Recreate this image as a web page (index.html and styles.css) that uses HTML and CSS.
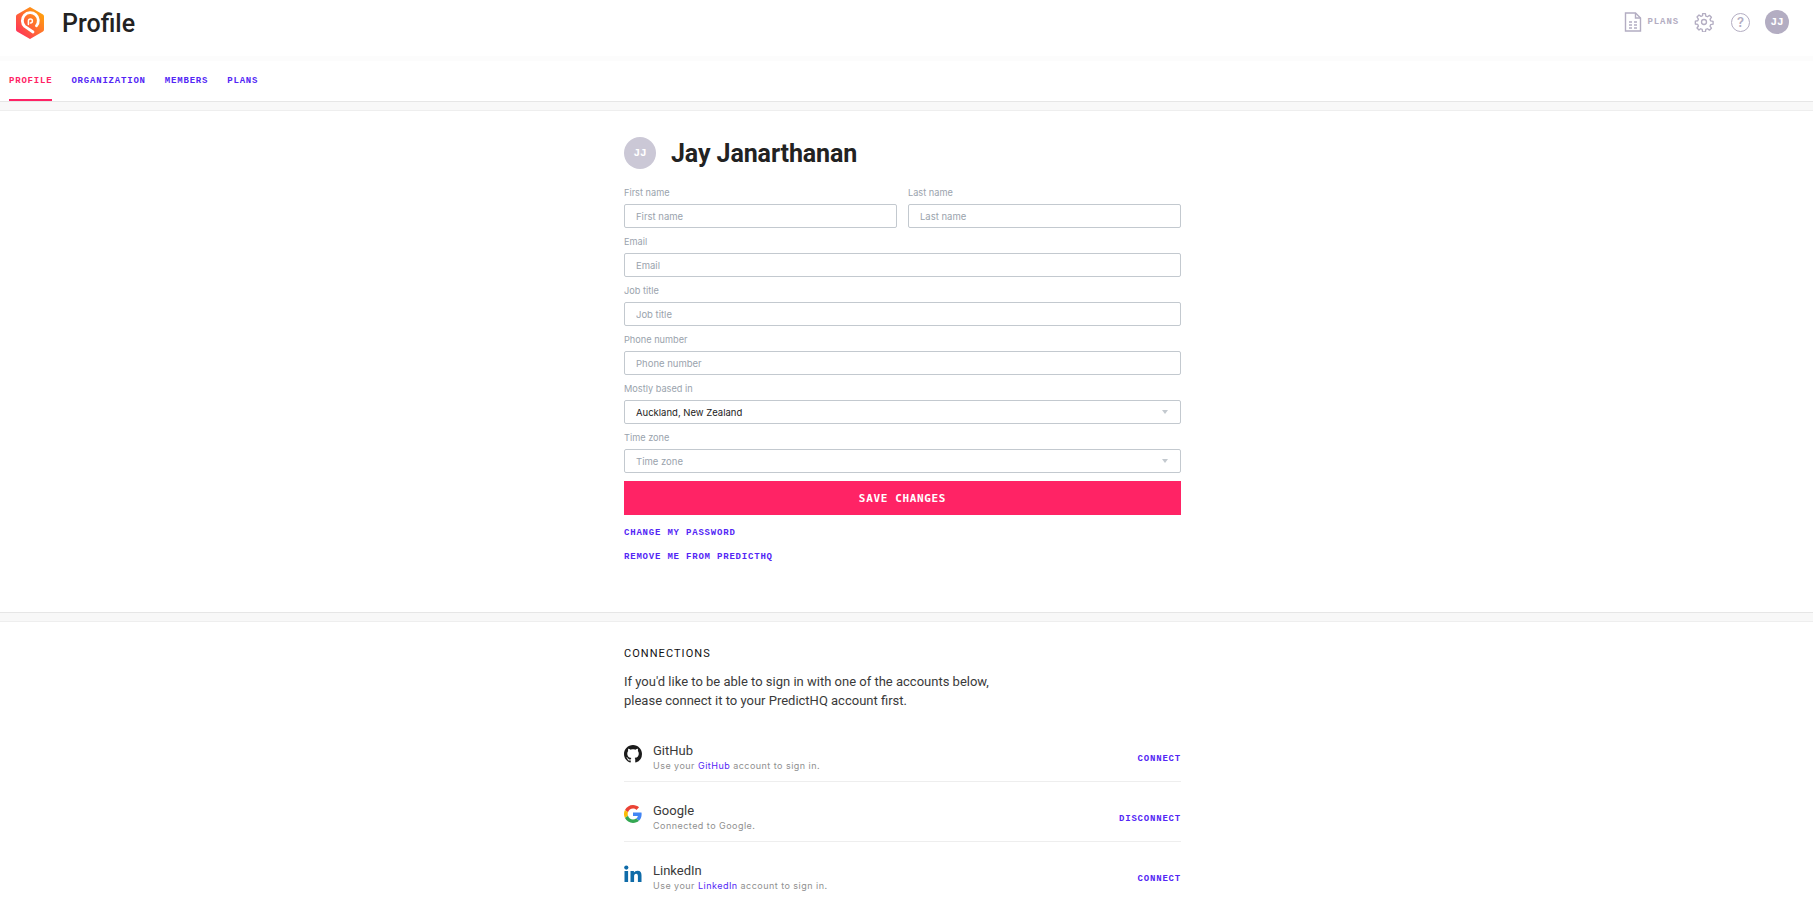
FILE: index.html
```html
<!doctype html>
<html lang="en">
  <head>
    <meta charset="UTF-8" />
    <title>Profile</title>
    <link rel="stylesheet" href="styles.css">
  </head>
  <body>
    <header class="top-bar">
      <div class="brand">
        <svg class="logo" width="30" height="34" viewBox="0 0 30 34">
          <defs>
            <linearGradient id="logoGrad" x1="0" y1="1" x2="1" y2="0">
              <stop offset="0" stop-color="#ff2365" />
              <stop offset="1" stop-color="#ffb300" />
            </linearGradient>
          </defs>
          <path d="M15 1 L28 8.5 Q29 9 29 10.5 V23.5 Q29 25 28 25.5 L15 33 L2 25.5 Q1 25 1 23.5 V10.5 Q1 9 2 8.5 Z" fill="url(#logoGrad)" />
          <path d="M18 26 L9.8 20.4 A8 8 0 1 1 21.4 19.8" fill="none" stroke="#fff" stroke-width="2.8" stroke-linecap="round" stroke-linejoin="round" />
          <path d="M13.4 18.6 V15 A2 2 0 1 1 15.4 17" fill="none" stroke="#fff" stroke-width="1.5" stroke-linecap="round" />
        </svg>
        <h1>Profile</h1>
      </div>
      <div class="top-actions">
        <svg width="18" height="20" viewBox="0 0 18 20" fill="none" stroke="#b3adc2" stroke-width="1.4">
          <path d="M1.5 1h10l5 5v13h-15z" />
          <path d="M11.5 1v5h5M5 10h3M10 10h3M5 13h3M10 13h3M5 16h3M10 16h3" />
        </svg>
        <span class="plans-link">PLANS</span>
        <svg class="gear" width="20" height="20" viewBox="0 0 24 24" fill="none" stroke="#b3adc2" stroke-width="1.6">
          <circle cx="12" cy="12" r="3" />
          <path d="M10.3 2h3.4l.5 2.9 1.9.8 2.4-1.7 2.4 2.4-1.7 2.4.8 1.9 2.9.5v3.4l-2.9.5-.8 1.9 1.7 2.4-2.4 2.4-2.4-1.7-1.9.8-.5 2.9h-3.4l-.5-2.9-1.9-.8L6 21.6l-2.4-2.4 1.7-2.4-.8-1.9-2.9-.5v-3.4l2.9-.5.8-1.9L3.6 6 6 3.6 8.4 5.3l1.9-.8z" stroke-linejoin="round" />
        </svg>
        <span class="help">?</span>
        <span class="avatar avatar-small">JJ</span>
      </div>
    </header>

    <nav class="tabs">
      <a class="tab active">PROFILE</a>
      <a class="tab">ORGANIZATION</a>
      <a class="tab">MEMBERS</a>
      <a class="tab">PLANS</a>
    </nav>
    <div class="band"></div>

    <section class="profile">
      <div class="column">
        <div class="name-row">
          <span class="avatar avatar-large">JJ</span>
          <h2>Jay Janarthanan</h2>
        </div>
        <form class="form-grid">
          <div class="field">
            <label>First name</label>
            <input type="text" placeholder="First name" />
          </div>
          <div class="field">
            <label>Last name</label>
            <input type="text" placeholder="Last name" />
          </div>
          <div class="field wide">
            <label>Email</label>
            <input type="text" placeholder="Email" />
          </div>
          <div class="field wide">
            <label>Job title</label>
            <input type="text" placeholder="Job title" />
          </div>
          <div class="field wide">
            <label>Phone number</label>
            <input type="text" placeholder="Phone number" />
          </div>
          <div class="field wide">
            <label>Mostly based in</label>
            <div class="select filled">Auckland, New Zealand<span class="caret"></span></div>
          </div>
          <div class="field wide">
            <label>Time zone</label>
            <div class="select">Time zone<span class="caret"></span></div>
          </div>
          <button class="save wide" type="button">SAVE CHANGES</button>
        </form>
        <a class="mono-link first">CHANGE MY PASSWORD</a>
        <a class="mono-link">REMOVE ME FROM PREDICTHQ</a>
      </div>
    </section>
    <div class="band band-mid"></div>

    <section class="connections">
      <div class="column">
        <h3>CONNECTIONS</h3>
        <p class="intro">If you'd like to be able to sign in with one of the accounts below,<br />please connect it to your PredictHQ account first.</p>

        <div class="conn-row">
          <svg class="conn-icon" width="18" height="18" viewBox="0 0 16 16">
            <path fill="#1b1b1b" d="M8 0C3.58 0 0 3.58 0 8c0 3.54 2.29 6.53 5.47 7.59.4.07.55-.17.55-.38 0-.19-.01-.82-.01-1.49-2.01.37-2.53-.49-2.69-.94-.09-.23-.48-.94-.82-1.13-.28-.15-.68-.52-.01-.53.63-.01 1.08.58 1.23.82.72 1.21 1.87.87 2.33.66.07-.52.28-.87.51-1.07-1.78-.2-3.64-.89-3.64-3.95 0-.87.31-1.59.82-2.15-.08-.2-.36-1.02.08-2.12 0 0 .67-.21 2.2.82.64-.18 1.32-.27 2-.27s1.36.09 2 .27c1.53-1.04 2.2-.82 2.2-.82.44 1.1.16 1.92.08 2.12.51.56.82 1.27.82 2.15 0 3.07-1.87 3.75-3.65 3.95.29.25.54.73.54 1.48 0 1.07-.01 1.93-.01 2.2 0 .21.15.46.55.38A8.01 8.01 0 0 0 16 8c0-4.42-3.58-8-8-8z" />
          </svg>
          <div class="conn-text">
            <div class="conn-name">GitHub</div>
            <div class="conn-sub">Use your <a>GitHub</a> account to sign in.</div>
          </div>
          <a class="conn-action">CONNECT</a>
        </div>

        <div class="conn-row">
          <svg class="conn-icon" width="18" height="18" viewBox="0 0 48 48">
            <path fill="#ea4335" d="M24 9.5c3.5 0 6.7 1.2 9.2 3.6l6.9-6.9C35.9 2.4 30.5 0 24 0 14.6 0 6.5 5.4 2.6 13.2l8 6.2C12.5 13.7 17.8 9.5 24 9.5z" />
            <path fill="#4285f4" d="M47 24.5c0-1.6-.1-3.1-.4-4.5H24v9h13c-.6 3-2.2 5.5-4.7 7.2l7.7 6C44.4 38.1 47 31.9 47 24.5z" />
            <path fill="#fbbc05" d="M10.6 28.6A14.5 14.5 0 0 1 10.6 19.4l-8-6.2a24 24 0 0 0 0 21.6z" />
            <path fill="#34a853" d="M24 48c6.5 0 11.9-2.1 15.9-5.8l-7.7-6c-2.1 1.4-4.9 2.3-8.2 2.3-6.2 0-11.5-4.2-13.4-9.9l-8 6.2C6.5 42.6 14.6 48 24 48z" />
          </svg>
          <div class="conn-text">
            <div class="conn-name">Google</div>
            <div class="conn-sub">Connected to Google.</div>
          </div>
          <a class="conn-action">DISCONNECT</a>
        </div>

        <div class="conn-row last">
          <svg class="conn-icon" width="18" height="18" viewBox="0 0 18 18">
            <rect x="0.5" y="6" width="3.6" height="11" fill="#0f6ba8" />
            <circle cx="2.3" cy="2.6" r="2.1" fill="#0f6ba8" />
            <path fill="#0f6ba8" d="M6.5 6h3.4v1.6C10.5 6.6 11.8 5.7 13.5 5.7c3 0 4 1.9 4 4.8V17h-3.6v-5.8c0-1.5-.4-2.5-1.8-2.5s-2 1.1-2 2.5V17H6.5z" />
          </svg>
          <div class="conn-text">
            <div class="conn-name">LinkedIn</div>
            <div class="conn-sub">Use your <a>LinkedIn</a> account to sign in.</div>
          </div>
          <a class="conn-action">CONNECT</a>
        </div>
      </div>
    </section>
  </body>
</html>
```

FILE: styles.css
```css
html,
body {
  height: 901px;
  overflow: hidden;
}

body {
  margin: 0;
  font-family: "Inter", sans-serif;
  background-color: #fff;
  color: #222;
}

.top-bar {
  height: 56px;
  padding: 0 24px 0 15px;
  display: flex;
  justify-content: space-between;
  align-items: flex-start;
}

.brand {
  display: flex;
  align-items: center;
  height: 46px;
  gap: 17px;
}

.brand h1 {
  margin: 0;
  font-family: "Roboto", sans-serif;
  font-size: 25px;
  font-weight: 500;
  color: #222;
}

.top-actions {
  display: flex;
  align-items: center;
  height: 44px;
  color: #b3adc2;
}

.plans-link {
  margin-left: 5px;
  font-family: "Liberation Mono", monospace;
  font-size: 9px;
  font-weight: bold;
  letter-spacing: 0.9px;
}

.gear {
  margin-left: 15px;
}

.help {
  margin-left: 17px;
  width: 17px;
  height: 17px;
  border: 1.5px solid #b3adc2;
  border-radius: 50%;
  display: flex;
  align-items: center;
  justify-content: center;
  font-size: 13px;
  font-weight: 600;
}

.avatar {
  border-radius: 50%;
  display: flex;
  align-items: center;
  justify-content: center;
  color: #fff;
  font-family: "Liberation Mono", monospace;
  font-weight: bold;
}

.avatar-small {
  margin-left: 15px;
  width: 24px;
  height: 24px;
  background-color: #b3adc2;
  font-size: 11px;
}

.tabs {
  height: 40px;
  padding: 0 9px;
  display: flex;
  gap: 19px;
  border-top: 5px solid #fcfcfc;
  border-bottom: 1px solid #e6e6e6;
}

.tab {
  font-family: "Liberation Mono", monospace;
  font-size: 9px;
  font-weight: bold;
  letter-spacing: 0.8px;
  line-height: 40px;
  color: #5326f5;
}

.tab.active {
  height: 38px;
  color: #ff2365;
  border-bottom: 2px solid #ff2365;
}

.band {
  height: 8px;
  background-color: #f8f8f8;
  border-bottom: 1px solid #eee;
}

.band-mid {
  border-top: 1px solid #e6e6e6;
}

.column {
  width: 557px;
  margin-left: 624px;
}

.profile {
  height: 501px;
}

.name-row {
  display: flex;
  align-items: center;
  gap: 15px;
  padding-top: 26px;
}

.avatar-large {
  width: 32px;
  height: 32px;
  background-color: #cbc8d6;
  font-size: 11px;
}

.name-row h2 {
  margin: 0;
  font-family: "Roboto", sans-serif;
  font-size: 25px;
  font-weight: 700;
  letter-spacing: -0.1px;
  color: #222;
}

.form-grid {
  margin-top: 17px;
  display: grid;
  grid-template-columns: 273px 273px;
  column-gap: 11px;
  row-gap: 7px;
}

.field {
  display: flex;
  flex-direction: column;
}

.wide {
  grid-column: 1 / 3;
}

label {
  height: 18px;
  font-size: 9.2px;
  line-height: 14px;
  color: #9aa3ad;
}

input,
.select {
  box-sizing: border-box;
  width: 100%;
  height: 24px;
  padding: 0 11px;
  border: 1px solid #c3c9cf;
  border-radius: 2px;
  font-family: "Inter", sans-serif;
  font-size: 9.5px;
  color: #222;
  background-color: #fff;
}

input::placeholder {
  color: #9aa3ad;
  opacity: 1;
}

.select {
  display: flex;
  align-items: center;
  justify-content: space-between;
  color: #9aa3ad;
}

.select.filled {
  color: #222;
}

.caret {
  margin-right: 1px;
  border-left: 3.5px solid transparent;
  border-right: 3.5px solid transparent;
  border-top: 4px solid #c3c9cf;
}

.save {
  height: 34px;
  margin-top: 1px;
  border: none;
  background-color: #ff2365;
  color: #fff;
  font-family: "DejaVu Sans Mono", monospace;
  font-size: 11px;
  font-weight: bold;
  letter-spacing: 0.65px;
  cursor: pointer;
}

.mono-link {
  display: block;
  margin-top: 13px;
  font-family: "Liberation Mono", monospace;
  font-size: 9px;
  font-weight: bold;
  letter-spacing: 0.8px;
  line-height: 11px;
  color: #5326f5;
}

.connections {
  padding-top: 25px;
}

.connections h3 {
  margin: 0;
  font-family: "Roboto", sans-serif;
  font-size: 11px;
  font-weight: 400;
  letter-spacing: 1.05px;
  line-height: 14px;
  color: #111;
}

.intro {
  margin: 11px 0 24px;
  font-family: "Roboto", sans-serif;
  font-size: 13px;
  line-height: 19px;
  color: #3a3a3a;
}

.conn-row {
  height: 47px;
  margin-bottom: 12px;
  display: flex;
  align-items: center;
  border-bottom: 1px solid #eee;
}

.conn-row.last {
  border-bottom: none;
}

.conn-icon {
  flex-shrink: 0;
  margin-right: 11px;
  margin-bottom: 8px;
}

.conn-text {
  flex-grow: 1;
}

.conn-name {
  font-family: "Roboto", sans-serif;
  font-size: 13px;
  line-height: 16px;
  color: #3a3a3a;
}

.conn-sub {
  margin-top: 1px;
  font-size: 9px;
  line-height: 12px;
  letter-spacing: 0.47px;
  color: #8f8f8f;
}

.conn-sub a {
  color: #5326f5;
}

.conn-action {
  margin-top: 2px;
  font-family: "Liberation Mono", monospace;
  font-size: 9px;
  font-weight: bold;
  letter-spacing: 0.8px;
  color: #5326f5;
}
```
